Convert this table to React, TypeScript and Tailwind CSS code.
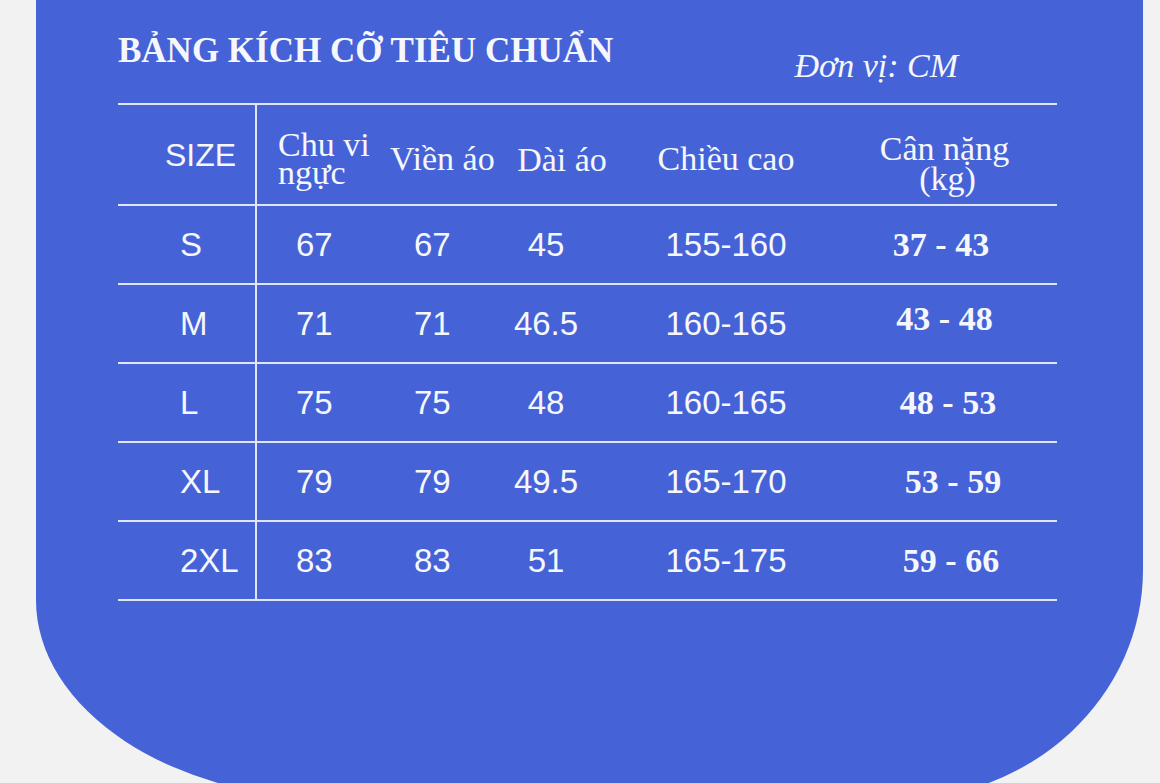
import React from 'react';

type Row = {
  size: string;
  chest: string;
  collar: string;
  length: string;
  height: string;
  weight: string;
  weightShift: string;
};

const rows: Row[] = [
  { size: 'S', chest: '67', collar: '67', length: '45', height: '155-160', weight: '37 - 43', weightShift: 'pr-[7px]' },
  { size: 'M', chest: '71', collar: '71', length: '46.5', height: '160-165', weight: '43 - 48', weightShift: 'pb-[9px]' },
  { size: 'L', chest: '75', collar: '75', length: '48', height: '160-165', weight: '48 - 53', weightShift: 'pl-[7px]' },
  { size: 'XL', chest: '79', collar: '79', length: '49.5', height: '165-170', weight: '53 - 59', weightShift: 'pl-[17px]' },
  { size: '2XL', chest: '83', collar: '83', length: '51', height: '165-175', weight: '59 - 66', weightShift: 'pl-[13px]' },
];

const serif = "font-['Liberation_Serif','Times_New_Roman',serif]";
const sans = "font-['Liberation_Sans',Arial,sans-serif]";

export default function App() {
  return (
    <div className="h-[783px] w-[1160px] overflow-hidden bg-[#f2f2f2]">
      <div className="ml-[36px] h-[800px] w-[1107px] rounded-bl-[305px_200px] rounded-br-[248px_230px] bg-[#4563d7] pl-[82px] text-[#f6f7fc]">
        <div className="w-[939px]">
          {/* heading */}
          <div className="flex h-[103px] items-start pt-[33px]">
            <h1 className={`${serif} text-[35px] font-bold leading-none`}>BẢNG KÍCH CỠ TIÊU CHUẨN</h1>
            <div className={`${serif} ml-auto mr-[99px] mt-[16px] text-[34px] italic leading-none`}>Đơn vị: CM</div>
          </div>

          <div className="border-t-2 border-[#dfe5fa]">
            {/* header row */}
            <div className="flex h-[101px] items-center border-b-2 border-[#dfe5fa]">
              <div className={`${sans} flex h-full w-[139px] items-center border-r-2 border-[#dfe5fa] pl-[47px] text-[32px] leading-none`}>
                SIZE
              </div>
              <div className={`${serif} w-[127px] pl-[21px] pt-[8px] text-[34px] leading-[28px]`}>
                Chu vi
                <br />
                ngực
              </div>
              <div className={`${serif} w-[120px] whitespace-nowrap pl-[6px] pt-[9px] text-[34px] leading-none`}>Viền áo</div>
              <div className={`${serif} w-[116px] whitespace-nowrap pt-[10px] text-center text-[34px] leading-none`}>Dài áo</div>
              <div className={`${serif} w-[212px] whitespace-nowrap pt-[9px] text-center text-[34px] leading-none`}>Chiều cao</div>
              <div className={`${serif} flex-1 pt-[18px] text-center text-[34px] leading-[30px]`}>
                Cân nặng
                <br />
                <span className="pl-[6px]">(kg)</span>
              </div>
            </div>

            {/* data rows */}
            {rows.map((r) => (
              <div key={r.size} className={`${sans} flex h-[79px] items-center border-b-2 border-[#dfe5fa] text-[33px] leading-none`}>
                <div className="flex h-full w-[139px] items-center border-r-2 border-[#dfe5fa] pl-[62px]">{r.size}</div>
                <div className="w-[127px] pl-[39px]">{r.chest}</div>
                <div className="w-[120px] pl-[30px]">{r.collar}</div>
                <div className="w-[116px] pr-[32px] text-center">{r.length}</div>
                <div className="w-[212px] text-center">{r.height}</div>
                <div className={`${serif} flex-1 text-center text-[34px] font-bold ${r.weightShift}`}>{r.weight}</div>
              </div>
            ))}
          </div>
        </div>
      </div>
    </div>
  );
}
